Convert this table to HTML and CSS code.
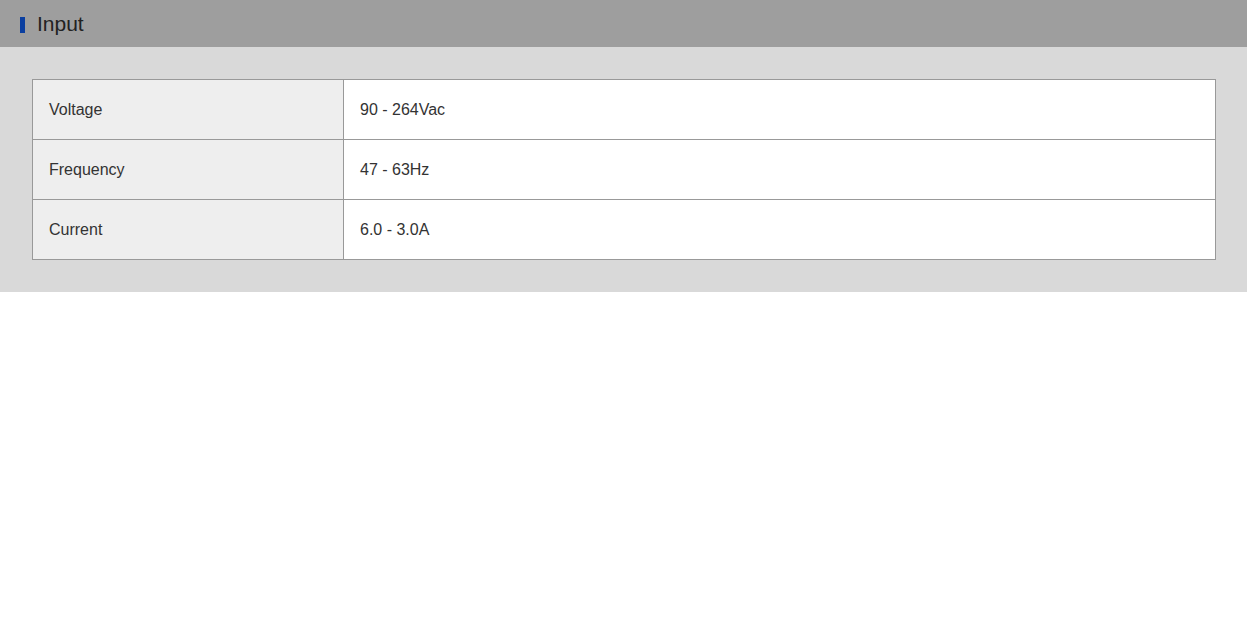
FILE: index.html
```html
<!DOCTYPE html>
<html>
<head>
<meta charset="utf-8">
<link rel="stylesheet" href="styles.css">
</head>
<body>
<div class="page">
  <div class="section-head">
    <span class="marker"></span>
    <h2 class="title">Input</h2>
  </div>
  <div class="section-body">
    <table class="spec">
      <tr><th>Voltage</th><td>90 - 264Vac</td></tr>
      <tr><th>Frequency</th><td>47 - 63Hz</td></tr>
      <tr><th>Current</th><td>6.0 - 3.0A</td></tr>
    </table>
  </div>
</div>
</body>
</html>
```
FILE: styles.css
```css
html, body {
  margin: 0;
  padding: 0;
  background: #fff;
}
body {
  font-family: "Liberation Sans", Arial, sans-serif;
  color: #333;
}
.page {
  width: 1247px;
}
.section-head {
  height: 47px;
  background: #9e9e9e;
  display: flex;
  align-items: center;
  padding-left: 20px;
  box-sizing: border-box;
}
.marker {
  width: 5px;
  height: 16px;
  background: #0b3fa0;
  margin-right: 12px;
  margin-top: 2px;
}
.title {
  margin: 0;
  font-size: 21px;
  font-weight: normal;
  color: #222;
}
.section-body {
  background: #d9d9d9;
  padding: 32px 31px 32px 32px;
}
.spec {
  width: 100%;
  border-collapse: collapse;
  border: 1px solid #999;
  font-size: 16px;
}
.spec th, .spec td {
  height: 59px;
  padding: 0 16px;
  border: 1px solid #999;
  text-align: left;
  font-weight: normal;
  color: #333;
}
.spec th {
  width: 278px;
  background: #eee;
}
.spec td {
  background: #fff;
}
```
